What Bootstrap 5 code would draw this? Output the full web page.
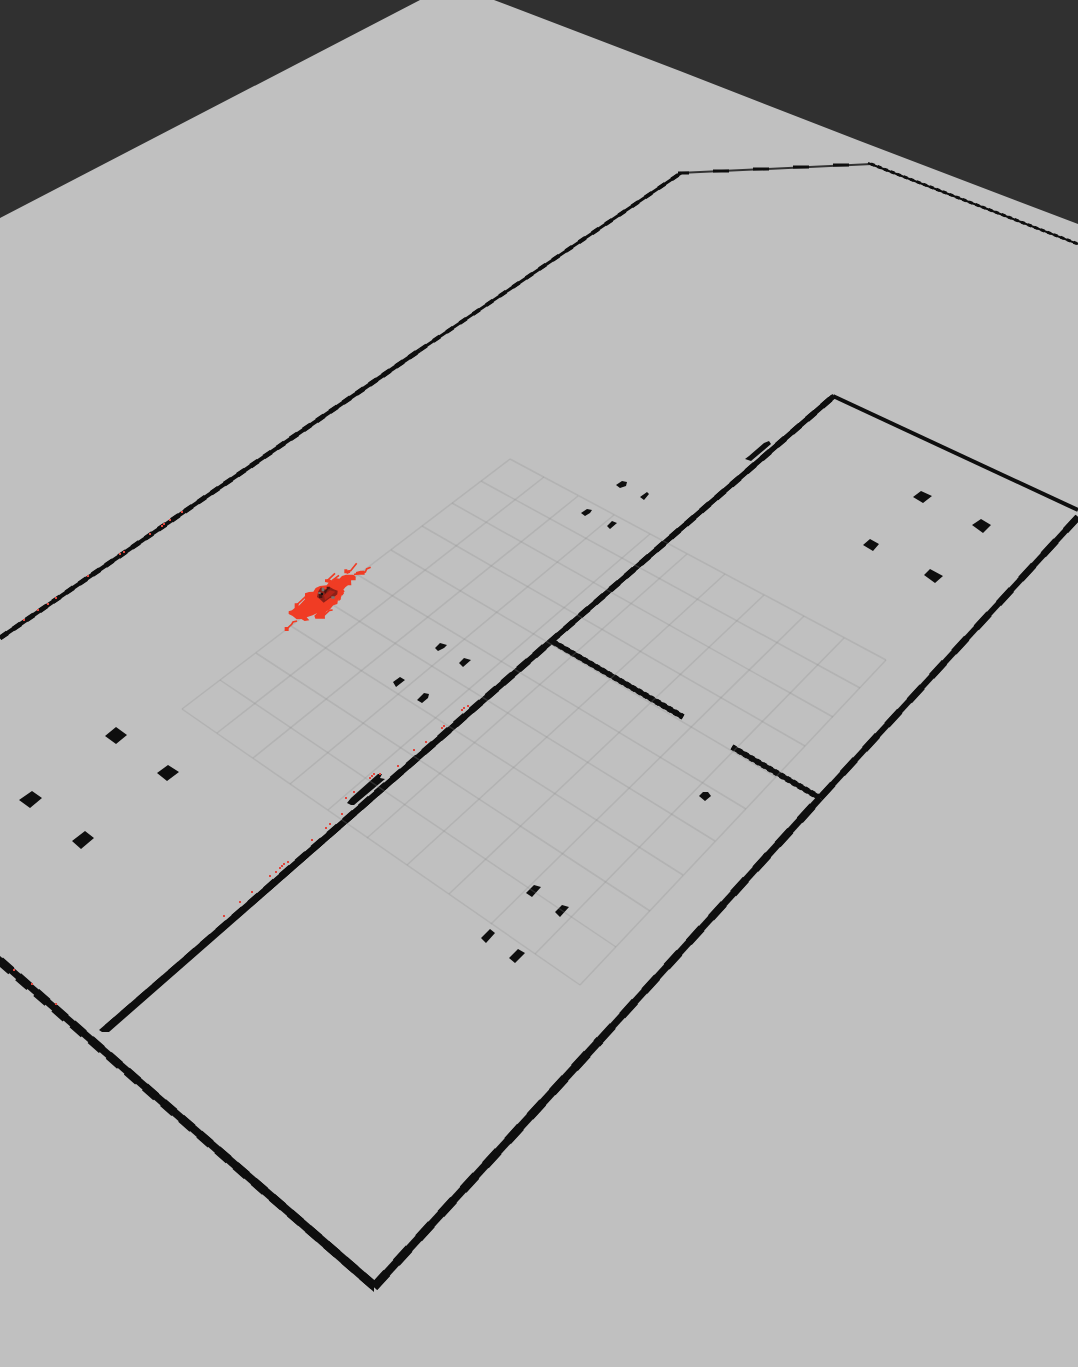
<!DOCTYPE html>
<html lang="en">
<head>
<meta charset="utf-8">
<meta name="viewport" content="width=device-width, initial-scale=1">
<title>Robot map view</title>
<link href="https://cdn.jsdelivr.net/npm/bootstrap@5.3.0/dist/css/bootstrap.min.css" rel="stylesheet">
<style>
  body { background: #c0c0c0; }
  .void-area { fill: #303030; }
  .wall-fill, .post { fill: #0e0e0e; }
  .wall-line { fill: none; stroke: #0e0e0e; }
  .floor-grid { fill: none; stroke: #8c8c8c; stroke-opacity: .25; stroke-width: 1.5; }
  .scan { fill: #e0453c; }
  .cloud { fill: #f03c24; stroke: none; }
  .arrow-line { fill: none; stroke: #f03c24; stroke-width: 5; }
</style>
</head>
<body>
<main class="container-fluid p-0 overflow-hidden">
<svg class="d-block w-100 h-auto" viewBox="0 0 1078 1367" role="img" aria-label="Occupancy map with robot pose estimate">
  <!-- space outside the map -->
  <path class="void-area" d="M0 0H420L0 218ZM494 0H1078V224L860 141L680 71Z"/>

  <!-- outer walls -->
  <path class="wall-line" stroke-width="4" d="M0 638L420 350"/>
  <path class="wall-line" stroke-width="5" stroke-dasharray="9 7" d="M0 638L420 350"/>
  <path class="wall-line" stroke-width="3" d="M420 350L681 173"/>
  <path class="wall-line" stroke-width="4" stroke-dasharray="8 8" d="M420 350L681 173"/>
  <path d="M679 173L872 164" fill="none" stroke="#333" stroke-width="2"/>
  <path class="wall-line" stroke-width="3" d="M678 173H689M713 171H729M753 169H769M793 167H809M833 165H849"/>
  <path class="wall-line" stroke-width="2" d="M868 163L1078 244"/>
  <path class="wall-line" stroke-width="3" stroke-dasharray="4 3" d="M871 164L1078 244"/>
  <path class="wall-fill" d="M0 956L374 1280L374 1292L0 965Z"/>
  <path class="wall-line" stroke-width="9" stroke-dasharray="15 9" d="M0 961L374 1286"/>
  <path class="wall-line" stroke-width="8" d="M374 1287L600 1040"/>
  <path class="wall-line" stroke-width="7" d="M600 1040L820 798"/>
  <path class="wall-line" stroke-width="6" d="M820 798L1078 517"/>
  <path class="wall-line" stroke-width="9" stroke-dasharray="19 14" d="M374 1287L600 1040"/>
  <path class="wall-line" stroke-width="8" stroke-dasharray="19 14" d="M600 1040L820 798"/>
  <path class="wall-line" stroke-width="7" stroke-dasharray="19 14" d="M820 798L1078 517"/>
  <path class="wall-line" stroke-width="4" d="M833 396L1078 510"/>

  <!-- inner walls -->
  <path class="wall-fill" d="M99 1030L106 1024L550 639L831 395L836 397L554 642L109 1032H102Z"/>
  <path class="wall-line" stroke-width="6" d="M250 904L550 642"/>
  <path class="wall-line" stroke-width="7" stroke-dasharray="13 8" d="M107 1028L550 642"/>
  <path class="wall-line" stroke-width="5" d="M550 642L834 396"/>
  <path class="wall-line" stroke-width="6" stroke-dasharray="11 9" d="M550 642L834 396"/>
  <path class="wall-line" stroke-width="5" d="M553 642L683 717M732 747L820 798"/>
  <path class="wall-line" stroke-width="6" stroke-dasharray="4 3" d="M553 642L683 717M732 747L820 798"/>
  <path class="wall-fill" d="M347 803L351 798L378 774H382L380 778L385 779L354 805H351ZM745 459L749 456L764 443L769 441L771 444L751 461Z"/>

  <!-- table and chair legs -->
  <g class="post">
    <path d="M105 736L116 727L127 735L116 744ZM157 773L168 765L179 772L167 781ZM19 800L32 791L42 798L30 808ZM72 841L85 831L94 838L81 849Z"/>
    <path d="M913 497L921 491L932 496L923 503ZM972 525L981 519L991 525L983 533ZM863 545L870 539L879 544L873 551ZM924 575L930 569L943 576L935 583Z"/>
    <path d="M616 485L622 481L627 482L626 486L620 488ZM640 497L647 492L649 494L644 500ZM581 513L587 509L592 510L590 513L585 516ZM607 526L612 521L617 523L610 529Z"/>
    <path d="M435 648L440 643L447 645L444 648L438 651ZM459 663L464 658L471 660L463 667ZM393 682L400 677L405 680L396 687ZM417 700L424 693L429 694L428 698L422 703Z"/>
    <path d="M699 796L703 792H708L711 796L705 801ZM526 893L534 885L541 887L532 897ZM555 912L562 905L569 907L560 917ZM481 938L490 929L495 933L486 943ZM509 958L518 949L525 953L515 963Z"/>
  </g>

  <!-- 10 by 10 floor grid in perspective -->
  <path class="floor-grid" d="M510 459L886 660M481 481L860 688M452 503L833 717M422 526L805 746M391 550L776 777M358 575L746 809M325 600L715 841M291 626L683 875M256 653L650 911M220 680L616 947M182 709L580 985"/>
  <path class="floor-grid" d="M510 459L182 709M544 477L217 733M578 496L253 758M614 515L290 784M650 534L328 810M687 554L367 838M725 574L407 865M764 595L449 894M804 616L491 924M844 638L535 954M886 660L580 985"/>

  <!-- laser scan hits -->
  <path class="scan" d="M223 915h2v2h-2zM239 901h2v2h-2zM251 891h2v2h-2zM269 875h2v2h-2zM275 871h2v2h-2zM279 867h2v2h-2zM281 865h2v2h-2zM283 863h2v2h-2zM287 861h2v2h-2zM311 839h2v2h-2zM325 827h2v2h-2zM329 823h2v2h-2zM341 813h2v2h-2zM345 797h2v2h-2zM353 791h2v2h-2zM369 777h2v2h-2zM371 775h2v2h-2zM373 773h2v2h-2zM379 773h2v2h-2zM397 765h2v2h-2zM413 749h2v2h-2zM425 741h2v2h-2zM441 727h2v2h-2zM443 725h2v2h-2zM461 709h2v2h-2zM463 707h2v2h-2zM467 705h2v2h-2z"/>
  <path class="scan" d="M23 619h2v2h-2zM37 609h2v2h-2zM47 603h2v2h-2zM55 597h2v2h-2zM87 575h2v2h-2zM119 553h2v2h-2zM123 551h2v2h-2zM149 533h2v2h-2zM161 525h2v2h-2zM163 523h2v2h-2zM169 519h2v2h-2zM181 511h2v2h-2zM13 969h2v2h-2zM31 983h2v2h-2zM55 1003h2v2h-2z"/>

  <!-- pose particle cloud with the robot on top, drawn on a three times finer grid -->
  <g transform="translate(270 550) scale(.3333)">
    <path class="cloud" d="M56 184L66 181L74 174L74 160H86V168L105 148V130L117 126L130 125L137 114L150 108L170 106L176 98L165 96V88H178L188 92L196 84L208 86L216 78L228 74H250L257 80V91H243L244 106H234L226 112L220 119L224 124L216 134L212 145L204 149L202 162L190 166L180 178L170 184L164 193L165 206H136L133 197L142 189L128 196L110 202L118 211L104 213L94 207L80 208L68 198L56 192Z"/>
    <path class="arrow-line" d="M50 237L65 223L69 216L81 213M226 65L242 62L260 40M230 70L240 66M252 74L270 69L286 66L290 57L302 52M172 92L195 70M186 92L207 76M80 165L110 137M155 203L178 181L188 180M205 151L212 145M215 135L220 128"/>
    <path class="cloud" d="M44 231H56V243H44ZM223 58H232V70H223ZM258 66L272 62H284V74H258Z"/>
    <path fill="#8c2018" d="M145 124L153 112L166 119L178 110L191 118L203 122L202 133L193 140L179 145L161 158L150 148L141 141Z"/>
    <path fill="#b42418" d="M162 136L180 121L196 125L181 139L165 151Z"/>
    <path fill="#4a1510" d="M147 130H157V144H147ZM170 110H179V118H170ZM160 122L176 115L166 131Z"/>
    <path fill="#77736d" d="M155 113H163V124H155ZM145 126H152V132H145ZM184 139H194V146H184Z"/>
    <path fill="#111" d="M153 129H159V135H153Z"/>
  </g>
</svg>
</main>
<script src="https://cdn.jsdelivr.net/npm/bootstrap@5.3.0/dist/js/bootstrap.bundle.min.js"></script>
</body>
</html>
